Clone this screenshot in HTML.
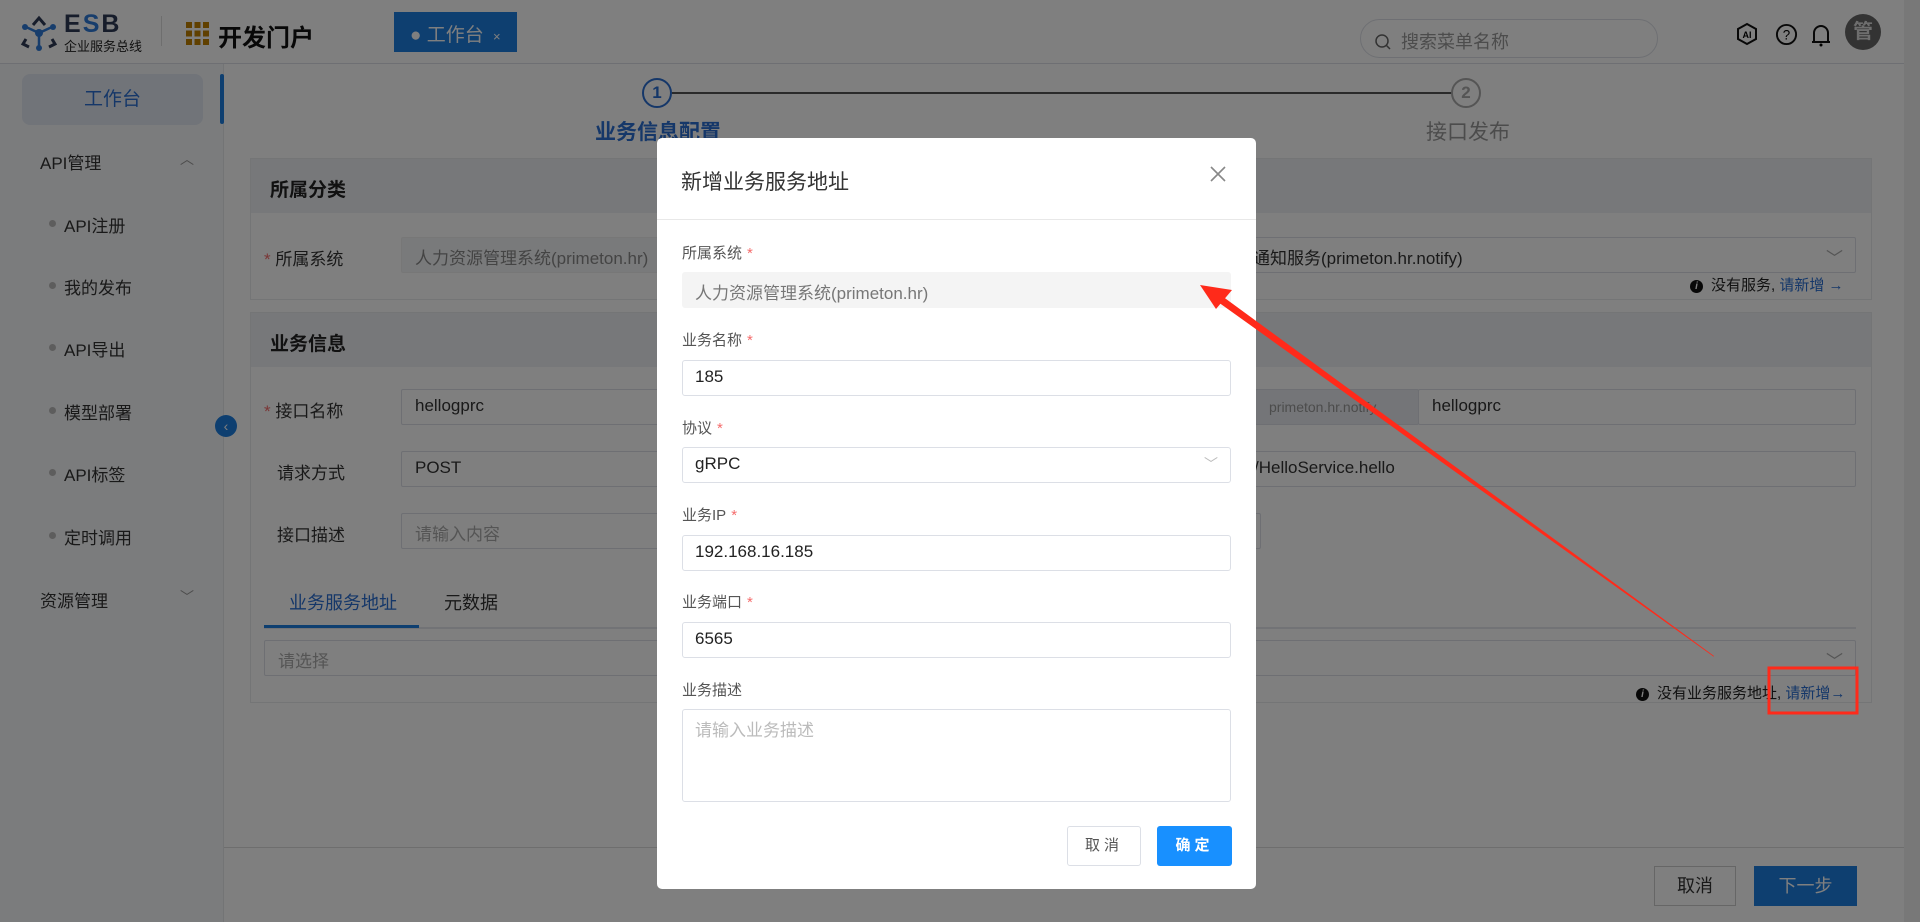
<!DOCTYPE html>
<html><head><meta charset="utf-8">
<style>
*{box-sizing:border-box;margin:0;padding:0}
body{width:1920px;height:922px;overflow:hidden;position:relative;background:#fff;font-family:"Liberation Sans","Noto Sans CJK SC",sans-serif;color:#333;font-size:17px}
.abs{position:absolute}
.hdr{left:0;top:0;width:1904px;height:64px;background:#fff;border-bottom:1px solid #dcdfe6}
.side{left:0;top:64px;width:224px;height:858px;background:#f7f8fa;border-right:1px solid #e6e8eb}
.mi{position:absolute;left:40px;font-size:17px;color:#333}
.sub{position:absolute;left:64px;font-size:17px;color:#333}
.sub:before{content:"";position:absolute;left:-15px;top:8px;width:7px;height:7px;border-radius:50%;background:#bbb}
.card{position:absolute;left:250px;width:1622px;border:1px solid #e8eaec;background:#fff}
.ch{height:54px;background:#eef0f4;font-weight:bold;font-size:19px;padding:16px 19px;color:#222}
.inp{position:absolute;height:36px;border:1px solid #dcdfe6;background:#fff;padding:6px 13px;font-size:17px;color:#333;border-radius:2px;white-space:nowrap;overflow:hidden}
.lab{position:absolute;font-size:17px;color:#333}
.req{color:#f56c6c}
.mask{left:0;top:0;width:1920px;height:922px;background:rgba(0,0,0,.5)}
.modal{left:657px;top:138px;width:599px;height:751px;background:#fff;border-radius:5px}
.ml{position:absolute;left:25px;font-size:15px;color:#555}
.ml i{font-style:normal;color:#f56c6c;margin-left:5px}
.mi2{position:absolute;left:25px;width:549px;height:36px;border:1px solid #dcdfe6;border-radius:3px;padding:6px 12px;font-size:17px;color:#222}
.info{display:inline-block;width:13px;height:13px;border-radius:50%;background:#111;color:#fff;font-size:10px;font-style:italic;font-weight:bold;text-align:center;line-height:13px;vertical-align:1px;margin-right:8px}
</style></head><body>

<div class="abs hdr">
  <svg class="abs" style="left:20px;top:14px" width="38" height="38" viewBox="0 0 38 38">
    <g fill="none" stroke="#2e3a56" stroke-width="3"><path d="M13 11 L19 4 L25 11"/><path d="M6 25 L3 30 L9 33"/><path d="M32 25 L35 30 L29 33"/></g>
    <g stroke="#2f7bd8" stroke-width="2.5"><line x1="19" y1="19" x2="6" y2="13"/><line x1="19" y1="19" x2="32" y2="13"/><line x1="19" y1="19" x2="19" y2="33"/></g>
    <g fill="#2f7bd8"><circle cx="19" cy="19" r="4"/><circle cx="5" cy="13" r="3"/><circle cx="33" cy="13" r="3"/><circle cx="19" cy="34" r="3"/></g>
  </svg>
  <div class="abs" style="left:64px;top:10px;font-size:25px;font-weight:bold;color:#2e3a56;letter-spacing:2px">E<span style="color:#2f7bd8">S</span>B</div>
  <div class="abs" style="left:64px;top:36px;font-size:13px;color:#222">企业服务总线</div>
  <div class="abs" style="left:161px;top:16px;width:1px;height:30px;background:#ddd"></div>
  <div class="abs" style="left:186px;top:22px;width:23px;height:23px;background:repeating-linear-gradient(90deg,#c08000 0 6px,transparent 6px 8.5px),#fff;-webkit-mask:repeating-linear-gradient(0deg,#000 0 6px,transparent 6px 8.5px)"></div>
  <div class="abs" style="left:218px;top:18px;font-size:24px;font-weight:bold;color:#111">开发门户</div>
  <div class="abs" style="left:394px;top:12px;width:123px;height:40px;background:#1c7ee0;color:#fff;font-size:19px;padding:8px 0 0 16px">● 工作台 <span style="font-size:13px;margin-left:4px">×</span></div>
  <div class="abs" style="left:1360px;top:19px;width:298px;height:39px;border:1px solid #dcdfe6;border-radius:20px;padding:8px 0 0 14px;color:#999;font-size:18px">
    <svg width="16" height="16" viewBox="0 0 16 16" style="vertical-align:-2px;margin-right:10px"><circle cx="7" cy="7" r="6" fill="none" stroke="#666" stroke-width="1.5"/><line x1="11" y1="11" x2="15" y2="15" stroke="#666" stroke-width="1.5"/></svg>搜索菜单名称</div>
  <svg class="abs" style="left:1735px;top:22px" width="24" height="24" viewBox="0 0 24 24"><path d="M12 2 L21 7 V17 L12 22 L3 17 V7 Z" fill="none" stroke="#111" stroke-width="2"/><text x="12" y="16" font-size="9" font-weight="bold" text-anchor="middle" font-family="Liberation Sans">AI</text></svg>
  <svg class="abs" style="left:1775px;top:23px" width="23" height="23" viewBox="0 0 24 24"><circle cx="12" cy="12" r="10" fill="none" stroke="#111" stroke-width="2"/><text x="12" y="17" font-size="14" text-anchor="middle" font-family="Liberation Sans">?</text></svg>
  <svg class="abs" style="left:1810px;top:22px" width="22" height="26" viewBox="0 0 22 26"><path d="M4 20 V11 A7 7 0 0 1 18 11 V20 Z M2 20 H20" fill="none" stroke="#111" stroke-width="2"/><circle cx="11" cy="23" r="1.5"/></svg>
  <div class="abs" style="left:1845px;top:14px;width:36px;height:36px;border-radius:50%;background:#666;color:#ddd;font-size:20px;font-weight:bold;text-align:center;line-height:36px">管</div>
</div>

<div class="abs side">
  <div class="abs" style="left:22px;top:10px;width:181px;height:51px;border-radius:8px;background:#e3e9f3;color:#2a6fd2;font-size:19px;text-align:center;line-height:51px">工作台</div>
  <div class="abs" style="left:220px;top:10px;width:4px;height:50px;background:#1c7ee0;border-radius:2px"></div>
  <div class="mi" style="top:85px">API管理 <span style="position:absolute;left:140px;color:#999;font-size:14px">︿</span></div>
  <div class="sub" style="top:148px">API注册</div>
  <div class="sub" style="top:210px">我的发布</div>
  <div class="sub" style="top:272px">API导出</div>
  <div class="sub" style="top:335px">模型部署</div>
  <div class="sub" style="top:397px">API标签</div>
  <div class="sub" style="top:460px">定时调用</div>
  <div class="mi" style="top:523px">资源管理 <span style="position:absolute;left:140px;color:#999;font-size:14px">﹀</span></div>
</div>
<div class="abs" style="left:215px;top:415px;width:22px;height:22px;border-radius:50%;background:#1c7ee0;color:#fff;font-size:14px;text-align:center;line-height:22px">‹</div>

<!-- steps -->
<div class="abs" style="left:642px;top:78px;width:30px;height:30px;border:2px solid #2a6fd2;border-radius:50%;color:#2a6fd2;font-weight:bold;text-align:center;line-height:26px">1</div>
<div class="abs" style="left:672px;top:92px;width:780px;height:2px;background:#555"></div>
<div class="abs" style="left:1451px;top:78px;width:30px;height:30px;border:2px solid #aaa;border-radius:50%;color:#aaa;font-weight:bold;text-align:center;line-height:26px">2</div>
<div class="abs" style="left:595px;top:116px;font-size:21px;font-weight:bold;color:#2a6fd2">业务信息配置</div>
<div class="abs" style="left:1426px;top:116px;font-size:21px;color:#999">接口发布</div>

<div class="card" style="top:158px;height:142px">
  <div class="ch">所属分类</div>
</div>
<div class="lab" style="left:264px;top:245px"><span class="req">*</span> 所属系统</div>
<div class="inp" style="left:401px;top:237px;width:860px;background:#f3f4f6;color:#888;border-color:#eee">人力资源管理系统(primeton.hr)</div>
<div class="inp" style="left:1200px;top:237px;width:656px;padding-left:52px">通知服务(primeton.hr.notify)<span style="position:absolute;right:12px;color:#aaa">﹀</span></div>
<div class="abs" style="left:1690px;top:274px;font-size:15px;color:#222"><span class="info">i</span>没有服务, <span style="color:#2a6fd2">请新增 →</span></div>

<div class="card" style="top:312px;height:391px">
  <div class="ch">业务信息</div>
</div>
<div class="lab" style="left:264px;top:397px"><span class="req">*</span> 接口名称</div>
<div class="inp" style="left:401px;top:389px;width:860px">hellogprc</div>
<div class="inp" style="left:1255px;top:389px;width:164px;background:#e8ebf0;color:#999;font-size:14px;padding-top:9px">primeton.hr.notify.</div>
<div class="inp" style="left:1418px;top:389px;width:438px">hellogprc</div>
<div class="lab" style="left:277px;top:459px">请求方式</div>
<div class="inp" style="left:401px;top:451px;width:1455px">POST<span style="position:absolute;left:852px">/HelloService.hello</span></div>
<div class="lab" style="left:277px;top:521px">接口描述</div>
<div class="inp" style="left:401px;top:513px;width:860px;color:#aaa">请输入内容</div>
<div class="abs" style="left:264px;top:627px;width:1592px;height:2px;background:#e4e7ed"></div>
<div class="abs" style="left:264px;top:625px;width:155px;height:3px;background:#1c7ee0"></div>
<div class="abs" style="left:289px;top:589px;font-size:18px;color:#2a6fd2">业务服务地址</div>
<div class="abs" style="left:444px;top:589px;font-size:18px;color:#333">元数据</div>
<div class="inp" style="left:264px;top:640px;width:1592px;color:#aaa">请选择<span style="position:absolute;right:12px;color:#aaa">﹀</span></div>
<div class="abs" style="left:1636px;top:682px;font-size:15px;color:#222"><span class="info">i</span>没有业务服务地址, <span style="color:#2a6fd2">请新增→</span></div>

<div class="abs" style="left:224px;top:847px;width:1680px;height:75px;background:#fff;border-top:1px solid #ddd"></div>
<div class="abs" style="left:1654px;top:866px;width:82px;height:40px;border:1px solid #ccc;background:#fff;text-align:center;line-height:38px;font-size:18px;color:#333">取消</div>
<div class="abs" style="left:1754px;top:866px;width:103px;height:40px;background:#1c7ee0;text-align:center;line-height:40px;font-size:18px;color:#fff">下一步</div>
<div class="abs" style="left:1904px;top:0;width:16px;height:922px;background:#f1f1f1"></div>

<div class="abs mask"></div>

<div class="abs modal">
  <div class="abs" style="left:24px;top:28px;font-size:21px;color:#333">新增业务服务地址</div>
  <svg class="abs" style="left:553px;top:28px" width="16" height="16" viewBox="0 0 16 16"><path d="M1 1 L15 15 M15 1 L1 15" stroke="#888" stroke-width="1.6"/></svg>
  <div class="abs" style="left:0;top:81px;width:599px;height:1px;background:#e8e8e8"></div>
  <div class="ml" style="top:104px">所属系统<i>*</i></div>
  <div class="mi2" style="top:134px;background:#f4f4f4;border-color:#f4f4f4;color:#777">人力资源管理系统(primeton.hr)</div>
  <div class="ml" style="top:191px">业务名称<i>*</i></div>
  <div class="mi2" style="top:222px">185</div>
  <div class="ml" style="top:279px">协议<i>*</i></div>
  <div class="mi2" style="top:309px">gRPC<span style="position:absolute;right:12px;color:#bbb;font-size:14px">﹀</span></div>
  <div class="ml" style="top:366px">业务IP<i>*</i></div>
  <div class="mi2" style="top:397px">192.168.16.185</div>
  <div class="ml" style="top:453px">业务端口<i>*</i></div>
  <div class="mi2" style="top:484px">6565</div>
  <div class="ml" style="top:541px">业务描述</div>
  <div class="mi2" style="top:571px;height:93px;color:#bbb">请输入业务描述</div>
  <div class="abs" style="left:410px;top:688px;width:74px;height:40px;border:1px solid #dcdfe6;border-radius:3px;text-align:center;line-height:38px;font-size:15px;color:#555;letter-spacing:4px">取消</div>
  <div class="abs" style="left:500px;top:688px;width:75px;height:40px;background:#1890ff;border-radius:3px;text-align:center;line-height:40px;font-size:15px;color:#fff;font-weight:bold;letter-spacing:4px">确定</div>
</div>

<svg class="abs" style="left:0;top:0" width="1920" height="922">
  <polygon points="1714,656 1713.6,656.6 1218,302 1222,296" fill="#ff2a1a"/>
  <polygon points="1200,285 1232,290 1216,309" fill="#ff2a1a"/>
  <rect x="1769" y="668" width="88" height="45" fill="none" stroke="#ff2a1a" stroke-width="3"/>
</svg>
</body></html>
